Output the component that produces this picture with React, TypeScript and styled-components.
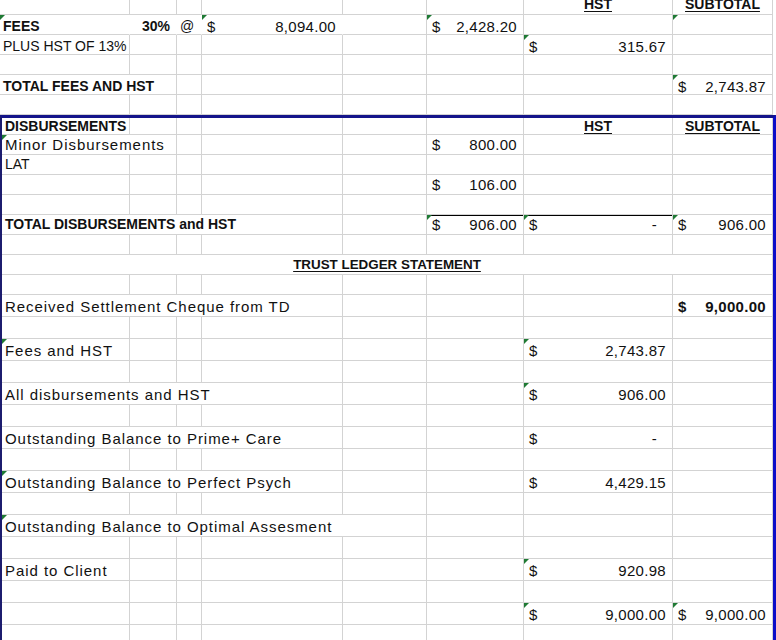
import React from "react";
import styled, { createGlobalStyle, css } from "styled-components";

const GlobalStyle = createGlobalStyle`
  html, body { margin: 0; padding: 0; background: #ffffff; }
  body { font-family: "Liberation Sans", Arial, sans-serif; color: #111; }
`;

const GRID = "#d3d3d3";
const COLS = [130, 47, 25, 141, 84, 97, 149, 100];

type Kind = "label" | "caps" | "bold" | "num" | "title" | "head";

const Text = styled.span<{ $kind?: Kind }>`
  line-height: 17px;
  ${(p) => {
    switch (p.$kind) {
      case "caps":
        return css`
          font-size: 14px;
        `;
      case "bold":
        return css`
          font-size: 14px;
          font-weight: 700;
        `;
      case "head":
        return css`
          font-size: 14px;
          font-weight: 700;
          text-decoration: underline;
          text-underline-offset: 2px;
        `;
      case "title":
        return css`
          font-size: 13.4px;
          font-weight: 700;
          text-decoration: underline;
          text-underline-offset: 2px;
        `;
      case "num":
        return css`
          font-size: 15px;
          letter-spacing: 0.3px;
        `;
      default:
        return css`
          font-size: 15px;
          letter-spacing: 0.95px;
        `;
    }
  }}
`;

const Cell = styled.div<{
  $span?: number;
  $nr?: boolean;
  $align?: "left" | "right" | "center";
  $top?: boolean;
  $pad?: number;
}>`
  position: relative;
  box-sizing: border-box;
  grid-column: span ${(p) => p.$span ?? 1};
  border-right: 1px solid ${(p) => (p.$nr ? "transparent" : GRID)};
  border-bottom: 1px solid ${GRID};
  display: flex;
  align-items: flex-end;
  justify-content: ${(p) =>
    p.$align === "right" ? "flex-end" : p.$align === "center" ? "center" : "flex-start"};
  padding: 0 ${(p) => p.$pad ?? 3}px 1px ${(p) => p.$pad ?? 3}px;
  overflow: hidden;
  white-space: nowrap;
  ${(p) =>
    p.$top &&
    css`
      box-shadow: inset 0 1px 0 #000;
    `}
`;

const MoneyCell = styled(Cell)`
  justify-content: space-between;
  padding: 0 6px 1px 5px;
`;

const Row = styled.div<{ $h: number; $boxed?: boolean; $low?: boolean }>`
  display: grid;
  grid-template-columns: ${(p) =>
    (p.$boxed ? [COLS[0] - 2, ...COLS.slice(1)] : COLS).map((c) => `${c}px`).join(" ")};
  height: ${(p) => p.$h}px;
  ${(p) =>
    p.$low &&
    css`
      ${Cell} {
        padding-bottom: 0;
      }
      ${Text} {
        line-height: 15px;
      }
    `}
`;

const Sheet = styled.div`
  width: 776px;
  height: 640px;
  overflow: hidden;
  background: #fff;
`;

const Upper = styled.div`
  width: 773px;
`;

const Box = styled.div`
  width: 771px;
  border-top: 3px solid #14148a;
  border-left: 2px solid #1c1c6e;
  border-right: 3px solid #0c0cc8;
`;

const Tri = styled.span`
  position: absolute;
  top: 0;
  left: 0;
  width: 0;
  height: 0;
  border-top: 5px solid #1f7a34;
  border-right: 5px solid transparent;
`;

const Amount = styled(Text)<{ $bold?: boolean; $dash?: boolean }>`
  font-weight: ${(p) => (p.$bold ? 700 : 400)};
  padding-right: ${(p) => (p.$dash ? 9 : 0)}px;
`;

type MoneyProps = { value: string; tri?: boolean; bold?: boolean; top?: boolean; nr?: boolean };

const Money = ({ value, tri, bold, top, nr }: MoneyProps) => (
  <MoneyCell $top={top} $nr={nr}>
    {tri && <Tri />}
    <Amount $kind="num" $bold={bold}>$</Amount>
    <Amount $kind="num" $bold={bold} $dash={value === "-"}>
      {value}
    </Amount>
  </MoneyCell>
);

const Blank = ({ n = 1, tri }: { n?: number; tri?: boolean }) => (
  <>
    {Array.from({ length: n }).map((_, i) => (
      <Cell key={i}>{tri && i === 0 && <Tri />}</Cell>
    ))}
  </>
);

const Label = ({
  children,
  span = 1,
  kind = "label",
  tri,
}: {
  children: React.ReactNode;
  span?: number;
  kind?: "label" | "caps" | "bold";
  tri?: boolean;
}) => (
  <Cell $span={span}>
    {tri && <Tri />}
    <Text $kind={kind}>{children}</Text>
  </Cell>
);

export default function App() {
  return (
    <>
      <GlobalStyle />
      <Sheet>
        <Upper>
          <Row $h={15}>
            <Blank n={6} />
            <Cell $align="center">
              <Text $kind="head">HST</Text>
            </Cell>
            <Cell $align="center">
              <Text $kind="head">SUBTOTAL</Text>
            </Cell>
          </Row>
          <Row $h={20} $low>
            <Cell $nr>
              <Tri />
              <Text $kind="bold">FEES</Text>
            </Cell>
            <Cell $nr $align="right" $pad={6}>
              <Text $kind="bold">30%</Text>
            </Cell>
            <Cell $nr $pad={3}>
              <Text $kind="caps">@</Text>
            </Cell>
            <Money value="8,094.00" tri nr />
            <Blank />
            <Money value="2,428.20" tri />
            <Blank />
            <Blank tri />
          </Row>
          <Row $h={20} $low>
            <Label kind="caps">PLUS HST OF 13%</Label>
            <Blank n={5} />
            <Money value="315.67" tri />
            <Blank />
          </Row>
          <Row $h={20} $low>
            <Blank n={8} />
          </Row>
          <Row $h={20} $low>
            <Label kind="bold" span={2}>
              TOTAL FEES AND HST
            </Label>
            <Blank n={5} />
            <Money value="2,743.87" tri />
          </Row>
          <Row $h={20} $low>
            <Blank n={8} />
          </Row>
        </Upper>

        <Box>
          <Row $h={17} $boxed $low>
            <Label kind="bold">DISBURSEMENTS</Label>
            <Blank n={5} />
            <Cell $align="center">
              <Text $kind="head">HST</Text>
            </Cell>
            <Cell $align="center">
              <Text $kind="head">SUBTOTAL</Text>
            </Cell>
          </Row>
          <Row $h={20} $boxed>
            <Label span={2} tri>
              Minor Disbursements
            </Label>
            <Blank n={3} />
            <Money value="800.00" />
            <Blank n={2} />
          </Row>
          <Row $h={20} $boxed>
            <Label kind="caps">LAT</Label>
            <Blank n={7} />
          </Row>
          <Row $h={20} $boxed>
            <Blank n={5} />
            <Money value="106.00" />
            <Blank n={2} />
          </Row>
          <Row $h={20} $boxed>
            <Blank n={8} />
          </Row>
          <Row $h={20} $boxed>
            <Label kind="bold" span={4}>
              TOTAL DISBURSEMENTS and HST
            </Label>
            <Blank />
            <Money value="906.00" tri top />
            <Money value="-" tri top />
            <Money value="906.00" tri />
          </Row>
          <Row $h={20} $boxed>
            <Blank n={8} />
          </Row>
          <Row $h={20} $boxed>
            <Cell $span={8} $align="center">
              <Text $kind="title">TRUST LEDGER STATEMENT</Text>
            </Cell>
          </Row>
          <Row $h={20} $boxed>
            <Blank n={8} />
          </Row>

          <Row $h={22} $boxed>
            <Label span={4}>Received Settlement Cheque from TD</Label>
            <Blank n={3} />
            <Money value="9,000.00" bold />
          </Row>
          <Row $h={22} $boxed>
            <Blank n={8} />
          </Row>
          <Row $h={22} $boxed>
            <Label tri>Fees and HST</Label>
            <Blank n={5} />
            <Money value="2,743.87" tri />
            <Blank />
          </Row>
          <Row $h={22} $boxed>
            <Blank n={8} />
          </Row>
          <Row $h={22} $boxed>
            <Label span={4}>All disbursements and HST</Label>
            <Blank n={2} />
            <Money value="906.00" tri />
            <Blank />
          </Row>
          <Row $h={22} $boxed>
            <Blank n={8} />
          </Row>
          <Row $h={22} $boxed>
            <Label span={4}>Outstanding Balance to Prime+ Care</Label>
            <Blank n={2} />
            <Money value="-" />
            <Blank />
          </Row>
          <Row $h={22} $boxed>
            <Blank n={8} />
          </Row>
          <Row $h={22} $boxed>
            <Label span={4} tri>
              Outstanding Balance to Perfect Psych
            </Label>
            <Blank n={2} />
            <Money value="4,429.15" />
            <Blank />
          </Row>
          <Row $h={22} $boxed>
            <Blank n={8} />
          </Row>
          <Row $h={22} $boxed>
            <Label span={5} tri>
              Outstanding Balance to Optimal Assesment
            </Label>
            <Blank n={3} />
          </Row>
          <Row $h={22} $boxed>
            <Blank n={8} />
          </Row>
          <Row $h={22} $boxed>
            <Label>Paid to Client</Label>
            <Blank n={5} />
            <Money value="920.98" tri />
            <Blank />
          </Row>
          <Row $h={22} $boxed>
            <Blank n={8} />
          </Row>
          <Row $h={22} $boxed>
            <Blank n={6} />
            <Money value="9,000.00" tri />
            <Money value="9,000.00" tri />
          </Row>
          <Row $h={22} $boxed>
            <Blank n={8} />
          </Row>
        </Box>
      </Sheet>
    </>
  );
}
